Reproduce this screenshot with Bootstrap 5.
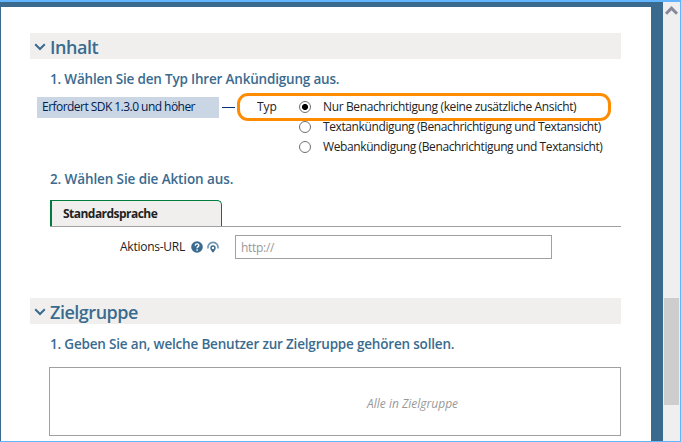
<!DOCTYPE html>
<html lang="de">
<head>
<meta charset="utf-8">
<title>Ankündigung</title>
<meta name="viewport" content="width=device-width, initial-scale=1">
<link href="https://cdn.jsdelivr.net/npm/bootstrap@5.3.0/dist/css/bootstrap.min.css" rel="stylesheet">
<style>
:root{--brand:#3a6b8f;--sky:#64b5ff}
body{font-family:"Open Sans","Noto Sans",sans-serif;font-size:12px;line-height:20px;color:#222;background:#fff}
.frame{width:681px;height:442px;border-top:2px solid var(--sky);border-right:1px solid var(--sky);border-bottom:1px solid var(--sky)}
.page{width:663px;border:solid var(--brand);border-width:5px 12px 0 1px;padding:26px 30px 0 29px}
.scroller{width:17px;background:#efefef}
.thumb{width:15px;height:107px;margin:279px 0 0 1px;background:#cdcdcd}
.section-bar{height:26px;padding-left:4px;background:#f0efee;color:var(--brand)}
.section-bar h2{font-size:18px;line-height:26px;font-weight:600;letter-spacing:-.48px;margin-left:4px;padding-top:1px}
.section-bar svg{margin-top:1px}
.step{height:20px;margin:10px 0 0 20px;font-size:13.5px;font-weight:600;letter-spacing:-.19px;color:var(--brand)}
.step-action{margin-top:12px;margin-bottom:11px;letter-spacing:-.11px}
.choice-first{height:20px;margin-top:8px}
.sdk{width:182px;height:21px;margin-left:7px;padding-left:5px;background:#cad6e4;color:#002050;letter-spacing:-.54px}
.dash{width:13px;height:1px;margin-left:3px;background:#00307a}
.picked{width:374px;height:28px;margin-left:2px;border:3px solid #ff8c00;border-radius:11px;padding-left:17px}
.picked .cap{width:42px}
.choice{height:20px;padding-left:269px}
.opt{letter-spacing:-.37px}
.choice .opt{letter-spacing:-.39px}
.dot{appearance:none;width:12px;height:12px;margin:0 12px 0 0;border:1px solid #707070;border-radius:50%;background:#fff}
.dot:checked{background:radial-gradient(circle,#000 0 2.7px,#fff 3.3px)}
.tabs{height:27px;margin-left:20px;border-bottom:1px solid #a0a0a0}
.lang{width:172px;height:26px;padding:1px 0 0 11px;font-weight:700;letter-spacing:-.53px;background:#f0efee;border:solid #007a3d;border-width:1px 1px 0 2px;border-top-right-radius:5px}
.url-row{height:24px;margin:8px 0 39px 90px}
.url-row label{width:71px;letter-spacing:-.25px}
.url{width:317px;height:24px;margin-left:16px;padding:0 5px;border:1px solid #a0a0a0;border-radius:0;font-size:12px;letter-spacing:-.3px}
.url::placeholder{color:#999;opacity:1}
.audience{width:572px;height:69px;margin:13px 0 0 19px;padding:5px 0 0 317px;border:1px solid #a0a0a0;color:#999}
</style>
<script src="https://cdn.jsdelivr.net/npm/bootstrap@5.3.0/dist/js/bootstrap.bundle.min.js"></script>
</head>
<body class="overflow-hidden">
<div class="frame d-flex overflow-hidden">
  <main class="page flex-shrink-0 text-nowrap">
    <div class="section-bar d-flex align-items-center">
      <svg width="12" height="10" viewBox="0 0 12 10"><path d="M1.2 2.2 6 7 10.8 2.2" fill="none" stroke="currentColor" stroke-width="2"/></svg>
      <h2 class="mb-0">Inhalt</h2>
    </div>
    <div class="step">1. Wählen Sie den Typ Ihrer Ankündigung aus.</div>
    <div class="d-flex align-items-center choice-first">
      <div class="sdk">Erfordert SDK 1.3.0 und höher</div>
      <div class="dash"></div>
      <label class="picked d-flex align-items-center"><span class="cap">Typ</span><input class="dot" type="radio" name="typ" checked><span class="opt">Nur Benachrichtigung (keine zusätzliche Ansicht)</span></label>
    </div>
    <label class="choice d-flex align-items-center"><input class="dot" type="radio" name="typ"><span class="opt">Textankündigung (Benachrichtigung und Textansicht)</span></label>
    <label class="choice d-flex align-items-center"><input class="dot" type="radio" name="typ"><span class="opt">Webankündigung (Benachrichtigung und Textansicht)</span></label>
    <div class="step step-action">2. Wählen Sie die Aktion aus.</div>
    <div class="tabs"><div class="lang d-flex align-items-center">Standardsprache</div></div>
    <div class="url-row d-flex align-items-center">
      <label for="url">Aktions-URL</label>
      <svg width="12" height="12" viewBox="0 0 12 12"><circle cx="6" cy="6" r="5.8" fill="#3a6b8f"/><path d="M4.2 4.6C4.3 2.3 7.8 2.4 7.8 4.4 7.8 5.7 6.1 5.6 6.1 7.3M6.1 8.3V9.7" fill="none" stroke="#fff" stroke-width="1.4"/></svg>
      <svg class="ms-1" width="12" height="12" viewBox="0 0 12 12"><path d="M1.2 7.6A5 4.9 0 1 1 10.8 7.6" fill="none" stroke="#6f98b6" stroke-width="1.6"/><path d="M6 11.8C4.4 10 3.3 8.6 3.3 7A2.7 2.7 0 0 1 8.7 7C8.7 8.6 7.6 10 6 11.8Z" fill="#3a6b8f"/><circle cx="6" cy="7" r="1.2" fill="#fff"/></svg>
      <input id="url" class="form-control url" placeholder="http://">
    </div>
    <div class="section-bar d-flex align-items-center">
      <svg width="12" height="10" viewBox="0 0 12 10"><path d="M1.2 2.2 6 7 10.8 2.2" fill="none" stroke="currentColor" stroke-width="2"/></svg>
      <h2 class="mb-0">Zielgruppe</h2>
    </div>
    <div class="step">1. Geben Sie an, welche Benutzer zur Zielgruppe gehören sollen.</div>
    <div class="audience d-flex align-items-center fst-italic">Alle in Zielgruppe</div>
  </main>
  <aside class="scroller flex-shrink-0">
    <svg class="d-block" width="17" height="17" viewBox="0 0 17 17"><path d="M3 11.7 8.5 6.2 14 11.7" fill="none" stroke="#868999" stroke-width="3"/></svg>
    <div class="thumb"></div>
  </aside>
</div>
</body>
</html>
